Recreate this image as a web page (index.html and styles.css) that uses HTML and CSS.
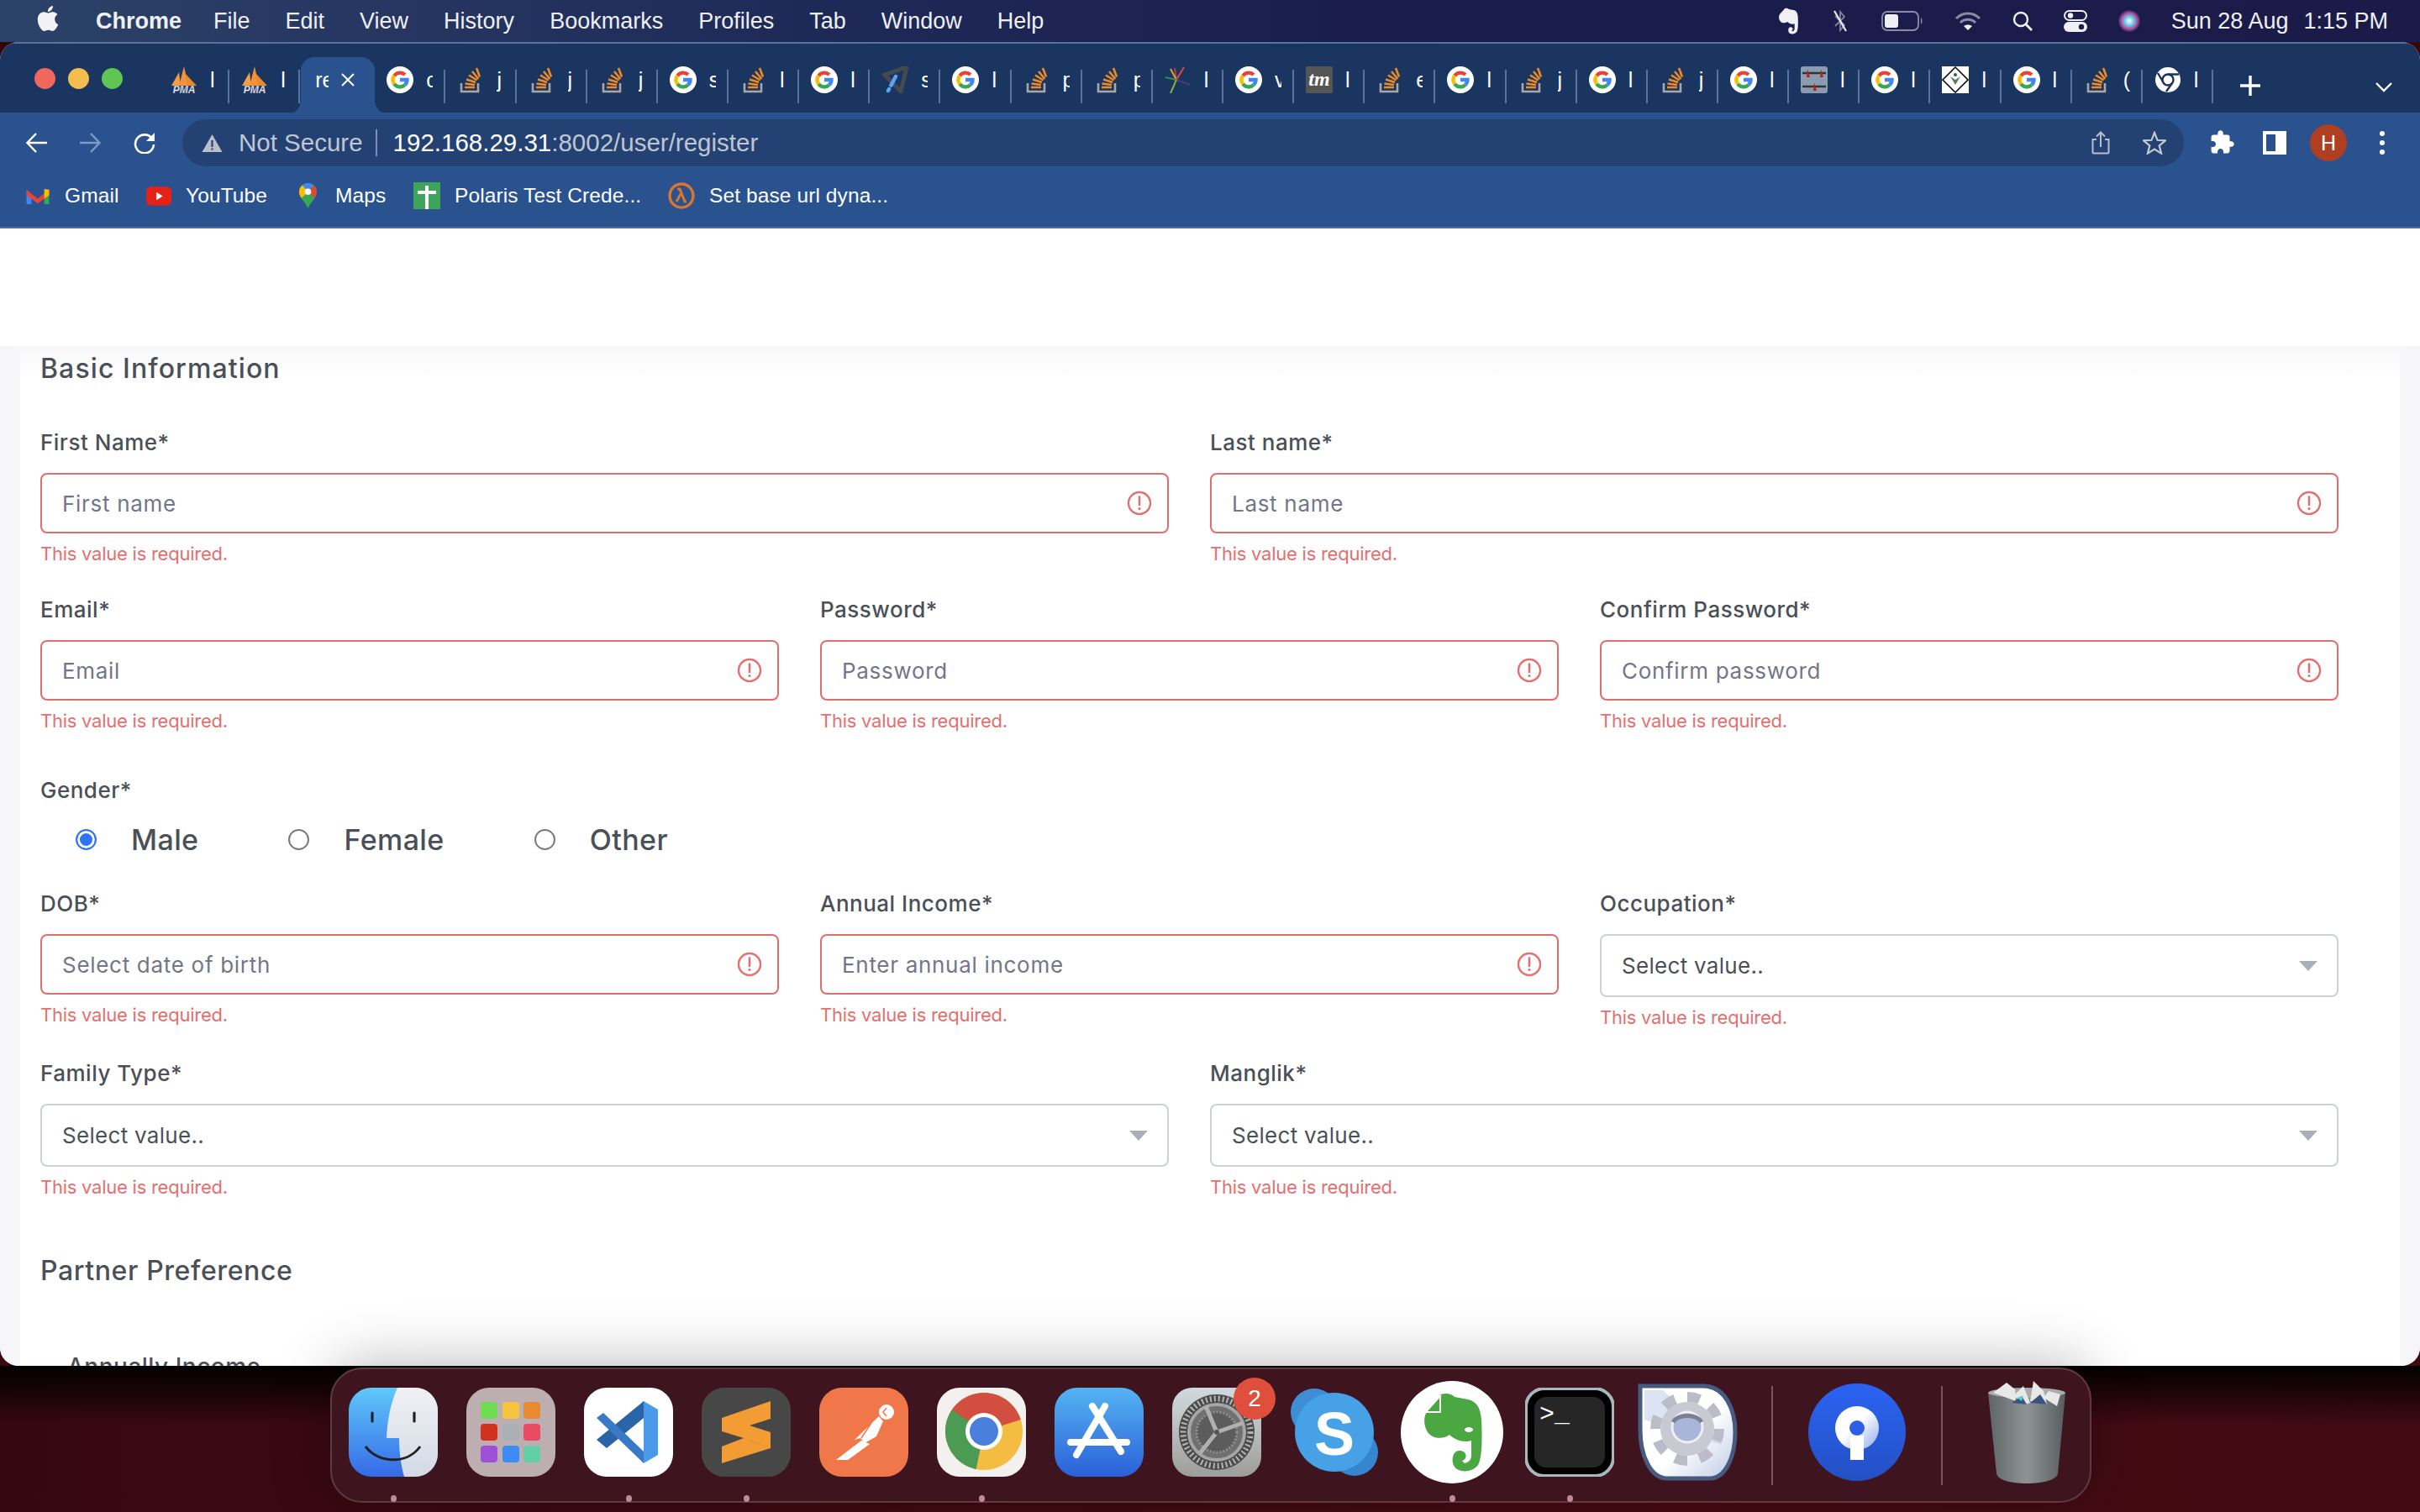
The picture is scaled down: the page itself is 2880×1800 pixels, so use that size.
FILE: index.html
```html
<!DOCTYPE html>
<html lang="en">
<head>
<meta charset="utf-8">
<title>Register</title>
<link rel="stylesheet" href="styles.css">
</head>
<body>
<svg class="defs" width="0" height="0" aria-hidden="true">
  <symbol id="g" viewBox="0 0 32 32">
    <circle cx="16" cy="16" r="16" fill="#fff"/>
    <g fill="none" stroke-width="4.4">
      <path d="M9.2 11.2A8.5 8.5 0 0 1 22 10" stroke="#ea4335"/>
      <path d="M9.2 11A8.5 8.5 0 0 0 9.2 21" stroke="#fbbc05"/>
      <path d="M9.2 21A8.5 8.5 0 0 0 22 22" stroke="#34a853"/>
      <path d="M22 22A8.5 8.5 0 0 0 24.5 16H16" stroke="#4285f4"/>
    </g>
  </symbol>
  <symbol id="so" viewBox="0 0 32 32">
    <path d="M5 20v10h20V20" fill="none" stroke="#a8a8a8" stroke-width="2.6"/>
    <g stroke="#f08a24" stroke-width="2.6">
      <path d="M9 25h12"/><path d="M9.5 20.5l11.5 1.5"/><path d="M11 15.5l11 3.6"/><path d="M14 10.5l9.6 6"/><path d="M18 6l7.4 9"/><path d="M23 2l4 10.5"/>
    </g>
  </symbol>
  <symbol id="pma" viewBox="0 0 32 32">
    <path d="M1 23L10 7l2 16z" fill="#f0a040"/>
    <path d="M10 23l6-23 5 23z" fill="#f3923a"/>
    <path d="M20 23l-3-15 14 15z" fill="#e98a30"/>
    <text x="16" y="32" class="pma-t">PMA</text>
  </symbol>
  <symbol id="alert" viewBox="0 0 30 30">
    <circle cx="15" cy="15" r="13" fill="none" stroke="#e46f6f" stroke-width="2.4"/>
    <path d="M15 7.5v9.5" stroke="#e46f6f" stroke-width="2.6" stroke-linecap="round"/>
    <circle cx="15" cy="21.5" r="1.6" fill="#e46f6f"/>
  </symbol>
  <symbol id="caret" viewBox="0 0 22 12"><path d="M0 0h22L11 12z" fill="#a9b0b8"/></symbol>
</svg>

<div class="desktop">
  <header class="menubar">
    <svg class="apple" viewBox="0 0 24 24"><path fill="#f2f2f5" d="M12.152 6.896c-.948 0-2.415-1.078-3.96-1.04-2.04.027-3.91 1.183-4.961 3.014-2.117 3.675-.546 9.103 1.519 12.09 1.013 1.454 2.208 3.09 3.792 3.039 1.52-.065 2.09-.987 3.935-.987 1.831 0 2.35.987 3.96.948 1.637-.026 2.676-1.48 3.676-2.948 1.156-1.688 1.636-3.325 1.662-3.415-.039-.013-3.182-1.221-3.22-4.857-.026-3.04 2.48-4.494 2.597-4.559-1.429-2.09-3.623-2.324-4.39-2.376-2-.156-3.675 1.09-4.61 1.09zM15.53 3.83c.843-1.012 1.4-2.427 1.245-3.83-1.207.052-2.662.805-3.532 1.818-.78.896-1.454 2.338-1.273 3.714 1.338.104 2.715-.688 3.559-1.701"/></svg>
    <nav class="menus">
      <span class="menu-app">Chrome</span><span>File</span><span>Edit</span><span>View</span><span>History</span><span>Bookmarks</span><span>Profiles</span><span>Tab</span><span>Window</span><span>Help</span>
    </nav>
    <div class="status">
      <svg class="st-ever" viewBox="18 14 80 96"><path d="M46 18c4-3 14-3 18 2l16 3c10 2 15 10 16 24 1 20 1 42-3 52-4 9-18 12-26 7-8-5-7-22 3-22 9 0 10 10 3 12l3 3c4-1 8-3 8-10V72c-9 3-20-1-26-7-8 6-20 5-26-3-6-10-4-20-1-24l18-20z" fill="#eef0f4"/></svg>
      <svg class="st-bt" viewBox="0 0 24 26"><path d="M6 7l11 11-5 6V2l5 6L6 19" fill="none" stroke="#7f84a0" stroke-width="1.8"/><path d="M5 1l14 24" stroke="#e8e9ee" stroke-width="2.2"/></svg>
      <svg class="st-batt" viewBox="0 0 50 24"><rect x="1" y="1" width="43" height="22" rx="6" fill="none" stroke="#8a8ca6" stroke-width="1.8"/><rect x="4" y="4" width="16" height="16" rx="3" fill="#eef0f4"/><path d="M47 8c2 1 2 7 0 8z" fill="#8a8ca6"/></svg>
      <svg class="st-wifi" viewBox="0 0 32 24"><g fill="none" stroke="#8a8ca6" stroke-width="3"><path d="M2 9c8-8 20-8 28 0"/><path d="M7 14c5-5 13-5 18 0"/></g><path d="M11 18c3-2 7-2 10 0l-5 5z" fill="#eef0f4"/></svg>
      <svg class="st-search" viewBox="0 0 24 24"><circle cx="10" cy="10" r="8" fill="none" stroke="#eef0f4" stroke-width="2.4"/><path d="M16 16l7 7" stroke="#eef0f4" stroke-width="2.8"/></svg>
      <svg class="st-cc" viewBox="0 0 28 26"><rect x="1" y="1" width="26" height="11" rx="5.5" fill="none" stroke="#eef0f4" stroke-width="2"/><circle cx="8" cy="6.5" r="3.2" fill="#eef0f4"/><rect y="14" width="28" height="12" rx="6" fill="#eef0f4"/><circle cx="21" cy="20" r="3.2" fill="#1b1c4a"/></svg>
      <svg class="st-siri" viewBox="0 0 26 26"><defs><radialGradient id="sr"><stop offset="0" stop-color="#fff"/><stop offset=".4" stop-color="#63d2e8"/><stop offset=".75" stop-color="#b24a9d"/><stop offset="1" stop-color="#2a2b58"/></radialGradient></defs><circle cx="13" cy="13" r="13" fill="url(#sr)"/></svg>
      <div class="clock"><span>Sun 28 Aug</span><span>1:15 PM</span></div>
    </div>
  </header>

  <main class="window">
    <div class="tabstrip">
      <div class="lights"><i class="light red"></i><i class="light yellow"></i><i class="light green"></i></div>
      <div class="tab"><svg class="fav"><use href="#pma"/></svg><span class="ttl">l</span></div>
      <div class="tab"><svg class="fav"><use href="#pma"/></svg><span class="ttl">l</span></div>
      <div class="tab active"><span class="ttl">re</span><svg class="close" viewBox="0 0 16 16"><path d="M1 1l14 14M15 1L1 15" stroke="#fff" stroke-width="2"/></svg></div>
      <div class="tab"><svg class="fav"><use href="#g"/></svg><span class="ttl">c</span></div>
      <div class="tab"><svg class="fav"><use href="#so"/></svg><span class="ttl">j</span></div>
      <div class="tab"><svg class="fav"><use href="#so"/></svg><span class="ttl">j</span></div>
      <div class="tab"><svg class="fav"><use href="#so"/></svg><span class="ttl">j</span></div>
      <div class="tab"><svg class="fav"><use href="#g"/></svg><span class="ttl">s</span></div>
      <div class="tab"><svg class="fav"><use href="#so"/></svg><span class="ttl">l</span></div>
      <div class="tab"><svg class="fav"><use href="#g"/></svg><span class="ttl">l</span></div>
      <div class="tab"><svg class="fav" viewBox="0 0 32 32"><path d="M4 10L30 1 23 30z" fill="none" stroke="#454a4e" stroke-width="5"/><path d="M17 12L8 29" stroke="#57a6f2" stroke-width="4.5" stroke-linecap="round" stroke-dasharray="12 5 1 1"/></svg><span class="ttl">s</span></div>
      <div class="tab"><svg class="fav"><use href="#g"/></svg><span class="ttl">l</span></div>
      <div class="tab"><svg class="fav"><use href="#so"/></svg><span class="ttl">p</span></div>
      <div class="tab"><svg class="fav"><use href="#so"/></svg><span class="ttl">p</span></div>
      <div class="tab"><svg class="fav" viewBox="0 0 32 32"><g fill="none" stroke-width="2"><path d="M14 16L12 2" stroke="#a44"/><path d="M14 16L7 3" stroke="#dba520"/><path d="M14 16L23 1" stroke="#d44"/><path d="M14 16L1 13" stroke="#3a8a4a"/><path d="M14 16L30 22" stroke="#43407a"/><path d="M14 16L7 32" stroke="#84b33a"/></g></svg><span class="ttl">l</span></div>
      <div class="tab"><svg class="fav"><use href="#g"/></svg><span class="ttl">v</span></div>
      <div class="tab"><svg class="fav" viewBox="0 0 32 32"><rect width="32" height="32" rx="2" fill="#555"/><text x="16" y="23" class="tm-t">tm</text></svg><span class="ttl">l</span></div>
      <div class="tab"><svg class="fav"><use href="#so"/></svg><span class="ttl">e</span></div>
      <div class="tab"><svg class="fav"><use href="#g"/></svg><span class="ttl">l</span></div>
      <div class="tab"><svg class="fav"><use href="#so"/></svg><span class="ttl">j</span></div>
      <div class="tab"><svg class="fav"><use href="#g"/></svg><span class="ttl">l</span></div>
      <div class="tab"><svg class="fav"><use href="#so"/></svg><span class="ttl">j</span></div>
      <div class="tab"><svg class="fav"><use href="#g"/></svg><span class="ttl">l</span></div>
      <div class="tab"><svg class="fav" viewBox="0 0 32 32"><rect width="32" height="32" rx="3" fill="#8b9cb0"/><path d="M2 8h28M2 24h28" stroke="#333" stroke-width="2.5"/><path d="M8 3l3 10h-4zM24 3l3 10h-4zM16 19l3 10h-4z" fill="#b3261e"/></svg><span class="ttl">l</span></div>
      <div class="tab"><svg class="fav"><use href="#g"/></svg><span class="ttl">l</span></div>
      <div class="tab"><svg class="fav" viewBox="0 0 32 32"><rect width="32" height="32" fill="#fff"/><path d="M16 1l15 15-15 15L1 16z" fill="none" stroke="#111" stroke-width="1.6"/><path d="M10 12l6 10 6-10-6 4z" fill="#4f7f5f"/><circle cx="16" cy="10" r="2" fill="#2e5d3e"/></svg><span class="ttl">l</span></div>
      <div class="tab"><svg class="fav"><use href="#g"/></svg><span class="ttl">l</span></div>
      <div class="tab"><svg class="fav"><use href="#so"/></svg><span class="ttl">(</span></div>
      <div class="tab"><svg class="fav" viewBox="0 0 32 32"><circle cx="16" cy="16" r="15" fill="#fff"/><circle cx="16" cy="16" r="6.5" fill="none" stroke="#1a3560" stroke-width="2.4"/><path d="M16 9.5h13M10.500 19L4 8M21 20L14 30" stroke="#1a3560" stroke-width="2.4"/></svg><span class="ttl">l</span></div>
      <svg class="plus" viewBox="0 0 24 24"><path d="M12 0v24M0 12h24" stroke="#fff" stroke-width="3.4"/></svg>
      <svg class="chev" viewBox="0 0 20 12"><path d="M1 1l9 9 9-9" fill="none" stroke="#fff" stroke-width="2.4"/></svg>
    </div>

    <div class="toolbar">
      <svg class="tb back" viewBox="0 0 26 26"><path d="M25 13H2M12 2L1.500 13 12 24" fill="none" stroke="#fff" stroke-width="2.4"/></svg>
      <svg class="tb forward" viewBox="0 0 26 26"><path d="M1 13h23M14 2l10.500 11L14 24" fill="none" stroke="#7f9ac6" stroke-width="2.4"/></svg>
      <svg class="tb reload" viewBox="0 0 26 26"><path d="M22 8a11 11 0 1 0 2 7" fill="none" stroke="#fff" stroke-width="2.6"/><path d="M25 1v10H15z" fill="#fff"/></svg>
      <div class="omnibox">
        <svg class="warn" viewBox="0 0 25 22"><path d="M12.500 1L24.500 22H.5z" fill="#b9bfca"/><path d="M12.500 8v8M12.500 17.500v2" stroke="#234273" stroke-width="2.200"/></svg>
        <span class="not-secure">Not Secure</span>
        <i class="omni-div"></i>
        <span class="url"><b>192.168.29.31</b>:8002/user/register</span>
        <svg class="omni-share" viewBox="0 0 22 28"><path d="M6 10H1.500v15c0 1 .5 1.500 1.500 1.500h16c1 0 1.500-.5 1.500-1.500V10H16M11 19V2M6 6.500L11 1.500l5 5" fill="none" stroke="#b9bfca" stroke-width="2"/></svg>
        <svg class="omni-star" viewBox="0 0 28 28"><path d="M14 2l3.500 8.800 9.500.6-7.300 6 2.400 9.200L14 21.500l-8.100 5.100 2.400-9.200L1 11.400l9.500-.6z" fill="none" stroke="#c3c8d1" stroke-width="2.200"/></svg>
      </div>
      <svg class="tb-ext" viewBox="0 0 24 24"><path fill="#fff" d="M20.500 11H19V7c0-1.100-.9-2-2-2h-4V3.500C13 2.120 11.880 1 10.500 1S8 2.120 8 3.500V5H4c-1.100 0-1.990.9-1.990 2v3.800H3.500c1.490 0 2.700 1.210 2.700 2.700s-1.210 2.700-2.700 2.700H2V20c0 1.100.9 2 2 2h3.800v-1.500c0-1.490 1.210-2.700 2.700-2.700 1.490 0 2.700 1.210 2.700 2.700V22H17c1.100 0 2-.9 2-2v-4h1.500c1.380 0 2.500-1.120 2.500-2.500S21.880 11 20.500 11z"/></svg>
      <svg class="tb-panel" viewBox="0 0 28 28"><path fill="#fff" fill-rule="evenodd" d="M0 0h28v28H0zM4 4v20h11V4z"/></svg>
      <div class="avatar">H</div>
      <svg class="tb-dots" viewBox="0 0 6 28"><circle cx="3" cy="3" r="3" fill="#fff"/><circle cx="3" cy="14" r="3" fill="#fff"/><circle cx="3" cy="25" r="3" fill="#fff"/></svg>
    </div>

    <div class="bookmarks">
      <span class="bm"><svg class="bm-i" viewBox="0 0 30 24"><path d="M1 5v17h6V10z" fill="#4285f4"/><path d="M29 5v17h-6V10z" fill="#34a853"/><path d="M1 4l14 11L29 4v7L15 21 1 11z" fill="#ea4335"/><path d="M23 3l6 1v7l-6 4z" fill="#fbbc05"/></svg>Gmail</span>
      <span class="bm"><svg class="bm-i" viewBox="0 0 32 24"><rect width="32" height="24" rx="6" fill="#e62117"/><path d="M13 7l8 5-8 5z" fill="#fff"/></svg>YouTube</span>
      <span class="bm"><svg class="bm-map" viewBox="0 0 24 32"><path d="M12 32C10 25 1 19 1 11a11 11 0 0 1 22 0c0 8-9 14-11 21z" fill="#34a853"/><path d="M5 3a11 11 0 0 1 14 0L12 11z" fill="#4285f4"/><path d="M19 3a11 11 0 0 1 4 8c0 3-1 5-3 8L12 11z" fill="#ea4335" opacity=".9"/><path d="M1 11a11 11 0 0 1 4-8l7 8-8 8c-2-3-3-5-3-8z" fill="#fbbc05"/><circle cx="12" cy="11" r="4" fill="#fff"/></svg>Maps</span>
      <span class="bm"><svg class="bm-map-w" viewBox="0 0 32 32"><rect width="32" height="32" fill="#3fa45b"/><path d="M16 4v28M5 12h22" stroke="#fff" stroke-width="4"/></svg>Polaris Test Crede...</span>
      <span class="bm"><svg class="bm-map-w" viewBox="0 0 32 32"><circle cx="16" cy="16" r="14" fill="none" stroke="#d9772e" stroke-width="3.400"/><path d="M11 8h3l6 15h2M15 14l-5 9" fill="none" stroke="#d9772e" stroke-width="3"/></svg>Set base url dyna...</span>
    </div>

    <div class="page">
      <div class="page-top"></div>
      <div class="page-body">
        <form class="card">
          <h2 class="section first">Basic Information</h2>

          <div class="row two">
            <div class="field"><label class="lab">First Name*</label>
              <div class="ctrl bad"><input class="inp" placeholder="First name"><svg class="ic"><use href="#alert"/></svg></div>
              <p class="err">This value is required.</p></div>
            <div class="field"><label class="lab">Last name*</label>
              <div class="ctrl bad"><input class="inp" placeholder="Last name"><svg class="ic"><use href="#alert"/></svg></div>
              <p class="err">This value is required.</p></div>
          </div>

          <div class="row three">
            <div class="field"><label class="lab">Email*</label>
              <div class="ctrl bad"><input class="inp" placeholder="Email"><svg class="ic"><use href="#alert"/></svg></div>
              <p class="err">This value is required.</p></div>
            <div class="field"><label class="lab">Password*</label>
              <div class="ctrl bad"><input class="inp" placeholder="Password"><svg class="ic"><use href="#alert"/></svg></div>
              <p class="err">This value is required.</p></div>
            <div class="field"><label class="lab">Confirm Password*</label>
              <div class="ctrl bad"><input class="inp" placeholder="Confirm password"><svg class="ic"><use href="#alert"/></svg></div>
              <p class="err">This value is required.</p></div>
          </div>

          <div class="gender">
            <label class="lab gender-lab">Gender*</label>
            <div class="radios">
              <span class="opt"><i class="radio on"></i>Male</span>
              <span class="opt"><i class="radio"></i>Female</span>
              <span class="opt"><i class="radio"></i>Other</span>
            </div>
          </div>

          <div class="row three">
            <div class="field"><label class="lab">DOB*</label>
              <div class="ctrl bad"><input class="inp" placeholder="Select date of birth"><svg class="ic"><use href="#alert"/></svg></div>
              <p class="err">This value is required.</p></div>
            <div class="field"><label class="lab">Annual Income*</label>
              <div class="ctrl bad"><input class="inp" placeholder="Enter annual income"><svg class="ic"><use href="#alert"/></svg></div>
              <p class="err">This value is required.</p></div>
            <div class="field"><label class="lab">Occupation*</label>
              <div class="ctrl sel"><span>Select value..</span><svg class="car"><use href="#caret"/></svg></div>
              <p class="err">This value is required.</p></div>
          </div>

          <div class="row two">
            <div class="field"><label class="lab">Family Type*</label>
              <div class="ctrl sel"><span>Select value..</span><svg class="car"><use href="#caret"/></svg></div>
              <p class="err">This value is required.</p></div>
            <div class="field"><label class="lab">Manglik*</label>
              <div class="ctrl sel"><span>Select value..</span><svg class="car"><use href="#caret"/></svg></div>
              <p class="err">This value is required.</p></div>
          </div>

          <h2 class="section">Partner Preference</h2>
          <label class="lab sub">Annually Income</label>
        </form>
      </div>
    </div>
  </main>

  <footer class="dock">
    <div class="slot"><svg class="ico" viewBox="0 0 106 106"><defs><linearGradient id="fb" x1="0" y1="0" x2="0" y2="1"><stop offset="0" stop-color="#60c8fb"/><stop offset="1" stop-color="#366ae8"/></linearGradient><linearGradient id="fw" x1="0" y1="0" x2="0" y2="1"><stop offset="0" stop-color="#f0f1f4"/><stop offset="1" stop-color="#d2dae6"/></linearGradient><clipPath id="fc"><rect width="106" height="106" rx="27"/></clipPath></defs><g clip-path="url(#fc)"><rect width="106" height="106" fill="url(#fb)"/><path d="M58 0c-8 18-12 38-13 60h15c0 16 2 32 6 46h40V0z" fill="url(#fw)"/></g><path d="M28 30v10M78 30v10" stroke="#222" stroke-width="3.200" stroke-linecap="round"/><path d="M20 70c16 21 50 21 65 0" fill="none" stroke="#222" stroke-width="3"/></svg><i class="dot"></i></div>
    <div class="slot"><svg class="ico" viewBox="0 0 106 106"><rect width="106" height="106" rx="27" fill="#bdafb1"/><rect x="17" y="17" width="20" height="20" rx="4" fill="#6fdc54"/><rect x="43" y="17" width="20" height="20" rx="4" fill="#f6c53d"/><rect x="68" y="17" width="20" height="20" rx="4" fill="#e98930"/><rect x="17" y="43" width="20" height="20" rx="4" fill="#d0321f"/><rect x="43" y="43" width="20" height="20" rx="4" fill="#aab0b3"/><rect x="68" y="43" width="20" height="20" rx="4" fill="#ea4b63"/><rect x="17" y="69" width="20" height="20" rx="4" fill="#9f50d6"/><rect x="43" y="69" width="20" height="20" rx="4" fill="#3d8cf3"/><rect x="68" y="69" width="20" height="20" rx="4" fill="#62cfa9"/></svg></div>
    <div class="slot"><svg class="ico" viewBox="0 0 106 106"><rect width="106" height="106" rx="27" fill="#fff"/><path d="M71 16V36L27 72 15 62z" fill="#2a64a8"/><path d="M15 36l8-6 48 46v14z" fill="#3879c8"/><path d="M71 16l17 10v54L71 90z" fill="#4b99e9"/></svg><i class="dot"></i></div>
    <div class="slot"><svg class="ico" viewBox="0 0 106 106"><rect width="106" height="106" rx="27" fill="#474747"/><path d="M24 36L82 16V37L57 45 82 53V72L24 90V70L50 60 24 52Z" fill="#f39c33"/><path d="M50 60L82 72 58 64z" fill="#d98a2a"/></svg><i class="dot"></i></div>
    <div class="slot"><svg class="ico" viewBox="0 0 106 106"><rect width="106" height="106" rx="27" fill="#f0774a"/><circle cx="80" cy="29" r="9" fill="#fff"/><path d="M80 24l-4 5 4 5" fill="none" stroke="#f0774a" stroke-width="1.500"/><path d="M71 34l5 6-8 18-14 8-5-6-7 2z" fill="#fff"/><path d="M50 63l10 4-26 19H20z" fill="#fff"/><path d="M62 42L50 60" stroke="#f0774a" stroke-width="1.500"/></svg></div>
    <div class="slot"><svg class="ico" viewBox="0 0 106 106"><defs><clipPath id="cc"><circle cx="56" cy="52" r="46"/></clipPath></defs><rect width="106" height="106" rx="27" fill="#f3f1ef"/><g clip-path="url(#cc)"><rect width="106" height="106" fill="#f4bd41"/><path d="M56 52L0 52 20 0h86v36z" fill="#d24f3f"/><path d="M56 52L8 20 0 60l20 50 25-5z" fill="#4c9b54"/></g><circle cx="56" cy="52" r="22" fill="#fff"/><circle cx="56" cy="52" r="17" fill="#4a80dd"/></svg><i class="dot"></i></div>
    <div class="slot"><svg class="ico" viewBox="0 0 106 106"><defs><linearGradient id="ab" x1="0" y1="0" x2="0" y2="1"><stop offset="0" stop-color="#55b4f2"/><stop offset="1" stop-color="#2a60d8"/></linearGradient></defs><rect width="106" height="106" rx="27" fill="url(#ab)"/><path d="M45 22l34 54M60 22L26 80M19 65h67" stroke="#fff" stroke-width="8" stroke-linecap="round" fill="none"/></svg></div>
    <div class="slot"><div class="badge-wrap"><svg class="ico" viewBox="0 0 106 106"><defs><linearGradient id="sg" x1="0" y1="0" x2="0" y2="1"><stop offset="0" stop-color="#d2dadf"/><stop offset="1" stop-color="#9d9d9a"/></linearGradient></defs><rect width="106" height="106" rx="24" fill="url(#sg)"/><circle cx="53" cy="53" r="45" fill="#4a4a4a"/><circle cx="53" cy="53" r="40" fill="none" stroke="#b5b5b5" stroke-width="7" stroke-dasharray="2 3"/><circle cx="53" cy="53" r="33" fill="#707070" stroke="#a6a6a6" stroke-width="4"/><circle cx="53" cy="53" r="24" fill="#5c5c5c" stroke="#8f8f8f" stroke-width="3" stroke-dasharray="2 2"/><path d="M53 53L40 22M53 53L84 42M53 53L33 78" stroke="#b0b0b0" stroke-width="5"/><circle cx="53" cy="53" r="3" fill="#555"/></svg><span class="badge">2</span></div></div>
    <div class="slot"><svg class="ico-skype" viewBox="0 0 104 104"><circle cx="28" cy="28" r="28" fill="#3e8ed6"/><circle cx="76" cy="76" r="28" fill="#3585cf"/><circle cx="52" cy="52" r="47" fill="#46a1e6"/><text x="52" y="79" class="sk-t">S</text></svg></div>
    <div class="slot"><svg class="ico-ever" viewBox="0 0 122 124"><circle cx="61" cy="62" r="61" fill="#fff"/><path d="M46 18c4-3 14-3 18 2l16 3c10 2 15 10 16 24 1 20 1 42-3 52-4 9-18 12-26 7-8-5-7-22 3-22 9 0 10 10 3 12l3 3c4-1 8-3 8-10V72c-9 3-20-1-26-7-8 6-20 5-26-3-6-10-4-20-1-24l18-20z" fill="#4aa742"/><path d="M47 18v20H26" fill="none" stroke="#fff" stroke-width="2"/><ellipse cx="81" cy="59" rx="5" ry="3" fill="#fff"/></svg><i class="dot"></i></div>
    <div class="slot"><svg class="ico" viewBox="0 0 106 106"><rect x="1" y="1" width="104" height="104" rx="22" fill="#000" stroke="#a9b7bd" stroke-width="4"/><rect x="11" y="11" width="84" height="84" rx="14" fill="#262626"/><text x="17" y="40" class="term-t">&gt;_</text></svg><i class="dot"></i></div>
    <div class="slot"><svg class="ico-gear" viewBox="0 0 119 116"><defs><linearGradient id="gd" x1="0" y1="0" x2="1" y2="1"><stop offset="0" stop-color="#fff"/><stop offset=".55" stop-color="#fff"/><stop offset="1" stop-color="#bcc9e6"/></linearGradient></defs><path d="M3 3h75c26 0 38 28 38 55 0 30-12 55-30 55H35C15 113 3 85 3 55z" fill="url(#gd)" stroke="#475a80" stroke-width="5"/><path d="M8 8h22l70 65-92-30z" fill="#c0cdea" opacity=".55"/><circle cx="59" cy="54" r="32" fill="#c9c9d3"/><circle cx="59" cy="54" r="38" fill="none" stroke="#bcbcc8" stroke-width="12" stroke-dasharray="15 14.800"/><circle cx="59" cy="52" r="18" fill="#a9b6da" stroke="#eeeef4" stroke-width="3"/><path d="M42 46c6-10 28-10 34 0" fill="none" stroke="#7f7f94" stroke-width="5"/></svg></div>
    <i class="sep"></i>
    <div class="slot"><svg class="ico-st" viewBox="0 0 116 116"><defs><linearGradient id="sb" x1="0" y1="0" x2="0" y2="1"><stop offset="0" stop-color="#2b63f2"/><stop offset="1" stop-color="#2350c4"/></linearGradient><linearGradient id="sw" x1="0" y1="0" x2="1" y2="1"><stop offset=".45" stop-color="#fff"/><stop offset="1" stop-color="#8ea9ec"/></linearGradient></defs><circle cx="58" cy="58" r="58" fill="url(#sb)"/><circle cx="58" cy="53" r="26" fill="url(#sw)"/><rect x="50" y="62" width="16" height="29" fill="#fff"/><circle cx="58" cy="53" r="9" fill="#2b5fe6"/></svg></div>
    <i class="sep"></i>
    <div class="slot"><svg class="ico-trash" viewBox="0 0 92 122"><defs><linearGradient id="tr" x1="0" y1="0" x2="1" y2="0"><stop offset="0" stop-color="#5f6467"/><stop offset=".5" stop-color="#8e9394"/><stop offset="1" stop-color="#585d60"/></linearGradient></defs><path d="M0 14h92l-9 96c-1 8-18 12-37 12S11 118 10 110z" fill="url(#tr)"/><ellipse cx="46" cy="14" rx="46" ry="6" fill="#a8acad"/><path d="M6 14L22 2l10 8L33 24zM30 18L42 6l8 20-6 2zM50 24L54 0l12 12 4 16zM66 20l6-8 14 4-4 14z" fill="#e8e8e8"/><path d="M28 26l12-8 6 10zM50 26l12-10 8 12z" fill="#39557f"/><path d="M34 20l8-2-2 6z" fill="#5bc6dc"/></svg></div>
  </footer>
</div>
</body>
</html>
```

FILE: styles.css
```css
* { box-sizing: border-box; }
html, body { margin: 0; padding: 0; }
body { width: 2880px; height: 1800px; overflow: hidden; font-family: "Liberation Sans", Arial, sans-serif; }
.defs { position: absolute; }
.pma-t { font: italic 700 12px "Liberation Sans", sans-serif; fill: #fff; stroke: #54618f; stroke-width: .4px; text-anchor: middle; }
.tm-t { font: italic 700 24px "Liberation Serif", serif; fill: #fff; text-anchor: middle; }
.sk-t { font: 700 72px "Liberation Sans", sans-serif; fill: #fff; text-anchor: middle; }
.term-t { font: 30px "Liberation Mono", monospace; fill: #fff; }

.desktop {
  position: relative; width: 2880px; height: 1800px; display: flex; flex-direction: column;
  background: radial-gradient(ellipse at 70% 100%, #470b13 0%, #3a0810 60%, #2f060c 100%);
}

/* Menu bar */
.menubar {
  height: 50px; flex: none; display: flex; align-items: center; color: #eef0f4; font-size: 27px;
  background: linear-gradient(90deg, #2c4268 0%, #1f2a59 32%, #1a1c4b 60%, #1a1b49 100%);
}
.apple { width: 30px; height: 30px; margin-left: 42px; flex: none; margin-top: -6px; }
.menus { display: flex; gap: 42px; margin-left: 42px; }
.menu-app { font-weight: 700; margin-right: -4px; }
.status { margin-left: auto; margin-right: 38px; display: flex; align-items: center; gap: 37px; }
.st-ever { width: 28px; height: 32px; }
.st-bt { width: 24px; height: 26px; }
.st-batt { width: 50px; height: 24px; }
.st-wifi { width: 32px; height: 24px; }
.st-search { width: 24px; height: 24px; }
.st-cc { width: 28px; height: 26px; }
.st-siri { width: 26px; height: 26px; }
.clock { display: flex; gap: 18px; }

/* Window */
.window {
  position: relative; width: 2880px; height: 1576px; flex: none; display: flex; flex-direction: column;
  overflow: hidden; border-radius: 22px; background: #fff;
}
.desktop::after {
  content: ""; position: absolute; left: 0; right: 0; top: 1626px; height: 70px;
  background: linear-gradient(180deg, rgba(0,0,0,.95) 0, rgba(0,0,0,.75) 25%, rgba(0,0,0,0) 100%);
}
.tabstrip {
  height: 84px; flex: none; display: flex; align-items: flex-start; padding-top: 16px; padding-left: 189px;
  background: #1a3560; border-top: 2px solid #56749f; position: relative;
}
.lights { position: absolute; left: 41px; top: 29px; display: flex; gap: 15px; }
.light { width: 25px; height: 25px; border-radius: 50%; display: block; }
.red { background: #f0685c; }
.yellow { background: #f5bd4f; }
.green { background: #5fc653; }
.tab {
  width: 84.15px; height: 68px; flex: none; display: flex; align-items: center; padding: 0 0 14px 14px;
  position: relative; color: #fff; font-size: 25px;
}
.tab:not(.active)::after {
  content: ""; position: absolute; right: 0; top: 15px; height: 40px; width: 2px; background: #56749f;
}
.tab.active {
  width: 88px; margin-left: 1px; background: #29528f; border-radius: 16px 16px 0 0; padding-left: 17px;
}
.tab.active::before, .tab.active::after {
  content: ""; position: absolute; bottom: 0; width: 16px; height: 16px;
}
.tab.active::before { left: -16px; background: radial-gradient(circle at 0 0, transparent 15.500px, #29528f 16px); }
.tab.active::after { right: -16px; background: radial-gradient(circle at 100% 0, transparent 15.500px, #29528f 16px); }
.fav { width: 32px; height: 32px; flex: none; }
.ttl { width: 8px; margin-left: 15px; overflow: hidden; white-space: nowrap; display: block; }
.active .ttl { width: 16px; margin-left: 0; }
.close { width: 16px; height: 16px; margin-left: 15px; flex: none; }
.plus { width: 24px; height: 24px; margin: 22px 0 0 32px; flex: none; }
.chev { width: 20px; height: 12px; margin: 30px 33px 0 auto; flex: none; }

.toolbar {
  height: 70px; flex: none; background: #29528f; display: flex; align-items: flex-start;
  padding: 8px 0 0 31px; position: relative;
}
.tb { width: 26px; height: 26px; flex: none; margin-top: 15px; }
.forward { margin-left: 37px; }
.reload { margin-left: 39px; }
.omnibox {
  width: 2382px; height: 56px; margin-left: 32px; background: #234273; border-radius: 28px;
  display: flex; align-items: center; padding: 0 21px 0 23px; color: #bfc6d2; font-size: 29.500px; flex: none;
}
.warn { width: 25px; height: 22px; flex: none; }
.not-secure { margin-left: 19px; }
.omni-div { width: 2px; height: 32px; background: #8193ad; margin: 0 19px 0 15px; display: block; }
.url { flex: 1; }
.url b { font-weight: 400; color: #fff; }
.omni-share { width: 22px; height: 28px; }
.omni-star { width: 28px; height: 28px; margin-left: 39px; }
.tb-ext { width: 31px; height: 31px; margin: 12px 0 0 30px; flex: none; }
.tb-panel { width: 28px; height: 28px; margin: 14px 0 0 33px; flex: none; }
.avatar {
  width: 44px; height: 44px; border-radius: 50%; background: #b03f22; color: #fff; font-size: 25px;
  display: flex; align-items: center; justify-content: center; margin: 6px 0 0 28px; flex: none;
}
.tb-dots { width: 6px; height: 28px; margin: 14px 0 0 39px; flex: none; }

.bookmarks {
  height: 68px; flex: none; background: #29528f; border-bottom: 2px solid #4a6ea5; display: flex; align-items: center;
  padding: 0 0 8px 30px; color: #fff; font-size: 24.500px; letter-spacing: .1px;
}
.bm { display: flex; align-items: center; }
.bm:nth-child(1) { width: 144px; }
.bm:nth-child(2) { width: 181px; }
.bm:nth-child(3) { width: 137px; }
.bm:nth-child(4) { width: 303px; }
.bm-i { width: 30px; height: 23px; margin-right: 17px; flex: none; }
.bm-map { width: 23px; height: 32px; margin-right: 21px; flex: none; }
.bm-map-w { width: 32px; height: 32px; margin-right: 17px; flex: none; }

/* Page */
.page { flex: 1; min-height: 0; display: flex; flex-direction: column; font-family: Inter, "Liberation Sans", sans-serif; }
.page-top { height: 140px; flex: none; background: #fff; }
.page-body { flex: 1; background: #f5f5fa; padding: 0 24px; overflow: hidden; }
.card {
  height: 100%; padding: 4px 73px 0 24px;
  background: linear-gradient(180deg, #f8f8fa 0, #fff 40px);
}
.section { margin: 62px 0 0; font-size: 32px; line-height: 46px; font-weight: 500; color: #4a5058; letter-spacing: .6px; }
.section.first { margin: 0 0 47px; letter-spacing: 1.1px; }
.row { display: grid; column-gap: 49px; margin-bottom: 34px; }
.row.two { grid-template-columns: 1343px 1343px; }
.row.three { grid-template-columns: 879px 879px 879px; }
.field { min-width: 0; }
.lab { display: block; font-size: 26px; line-height: 36px; font-weight: 500; color: #4a5058; margin-bottom: 18px; letter-spacing: .5px; }
.ctrl {
  height: 72px; border: 2px solid #ccd1d6; border-radius: 8px; display: flex; align-items: center;
  padding: 0 18px 0 24px; background: #fff;
}
.ctrl.bad { border-color: #e36d6d; }
.ctrl.sel { height: 75px; font-size: 26px; color: #4a5058; justify-content: space-between; padding-right: 23px; letter-spacing: .3px; }
.inp {
  flex: 1; min-width: 0; border: 0; outline: 0; background: transparent; padding: 0; font: 400 26px Inter, sans-serif; color: #4a5058; letter-spacing: .7px;
}
.inp::placeholder { color: #737589; opacity: 1; }
.ic { width: 30px; height: 30px; flex: none; }
.car { width: 22px; height: 12px; flex: none; }
.err { margin: 9px 0 0; font-size: 22px; line-height: 30px; color: #e56f6f; letter-spacing: -.25px; }
.gender { margin: 50px 0 35px; }
.gender-lab { margin-bottom: 16px; }
.radios { display: flex; padding-left: 42px; height: 48px; }
.opt { display: flex; align-items: center; gap: 41px; font-size: 34px; font-weight: 500; color: #4a5058; margin-right: 107px; letter-spacing: .4px; }
.radio { width: 25px; height: 25px; border-radius: 50%; border: 2px solid #7a7a7a; background: #fff; display: block; flex: none; }
.radio.on { border-color: #2f74f5; box-shadow: inset 0 0 0 3px #fff; background: #2f74f5; }
.sub { margin: 73px 0 0 32px; font-size: 28px; }

/* Dock */
.dock {
  position: absolute; left: 393px; top: 1628px; width: 2096px; height: 161px; z-index: 3; display: flex;
  padding-left: 3px; background: #3e151e; border: 2px solid #5e3b44; border-radius: 38px;
  box-shadow: 0 -4px 70px rgba(0,0,0,.28);
}
.slot {
  width: 140px; flex: none; display: grid; grid-template-rows: 150px 8px; justify-items: center; align-items: center;
}
.ico { width: 106px; height: 106px; }
.ico-skype { width: 104px; height: 104px; }
.ico-ever { width: 122px; height: 124px; }
.ico-gear { width: 119px; height: 116px; }
.ico-st { width: 116px; height: 116px; }
.ico-trash { width: 92px; height: 122px; }
.dot { width: 7px; height: 8px; border-radius: 50%; background: #c08a9a; display: block; }
.sep { width: 2px; height: 118px; background: #7a5560; margin: 20px 30px 0; flex: none; display: block; }
.badge-wrap { position: relative; width: 106px; height: 106px; }
.badge {
  position: absolute; right: -17px; top: -12px; width: 50px; height: 50px; border-radius: 50%; background: #e04f3c;
  color: #fff; font-size: 28px; display: flex; align-items: center; justify-content: center;
}
```
